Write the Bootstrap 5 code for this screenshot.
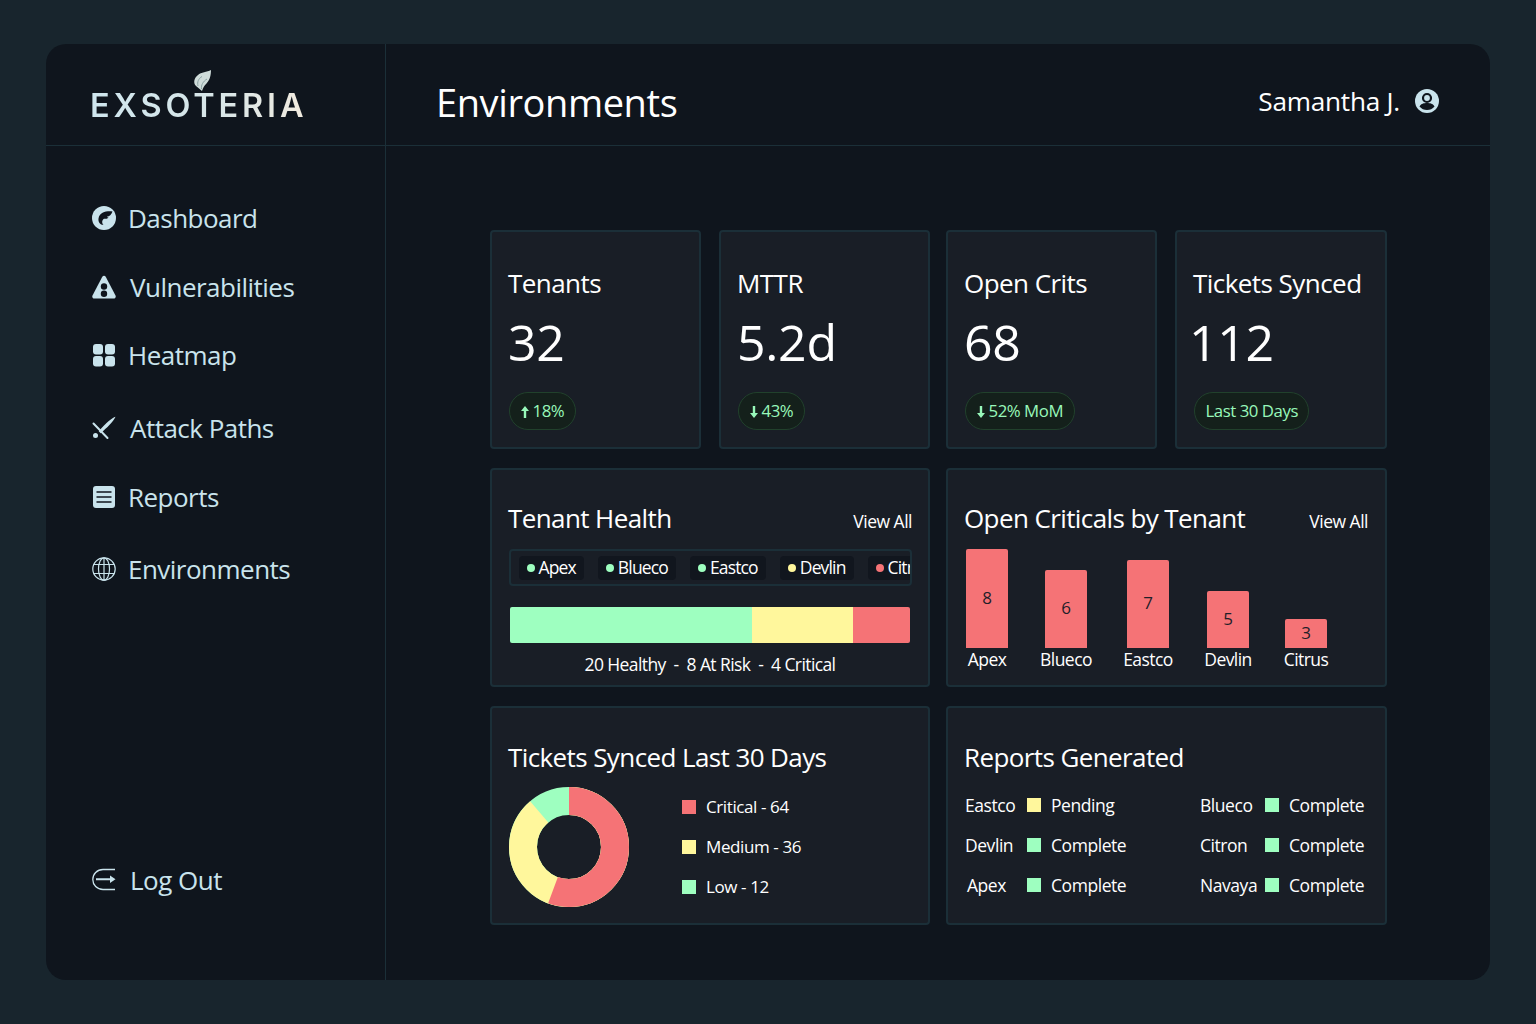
<!doctype html>
<html lang="en">
<head>
<meta charset="utf-8">
<title>Exsoteria - Environments</title>
<link href="https://cdn.jsdelivr.net/npm/bootstrap@5.3.0/dist/css/bootstrap.min.css" rel="stylesheet">
<style>
:root{--ink:#c9e3ec;--tile:#191e26;--line:#1b2f38;--shell:#0f151d;--red:#f57376;--yel:#fff79c;--grn:#9effc0}
html,body{height:100%}
body{background:#18252d;font-family:"Open Sans","Noto Sans",sans-serif;color:#fff;padding:44px 46px;overflow:hidden}
.shell{height:936px;background:var(--shell);border-radius:20px;overflow:hidden}
.rail{width:340px;flex:none;border-right:1px solid var(--line)}
.brand,.topbar{height:102px;border-bottom:1px solid var(--line);flex:none}
.brand{padding:43px 0 0 44px;position:relative}
.wordmark{font-family:Inter,sans-serif;font-weight:600;font-size:32.5px;line-height:38px;letter-spacing:3.85px;background:linear-gradient(90deg,#cfe6ee 0%,#d8e6e8 60%,#f2ebdf 100%);-webkit-background-clip:text;background-clip:text;color:transparent;display:inline-block}
.flame{position:absolute;left:147px;top:25px}
.rail-nav{padding:55px 0 0 46px}
.rail-link{color:var(--ink);font-size:26px;letter-spacing:-.52px;line-height:34px;padding:0;display:flex;align-items:center;gap:12px}
.rail-link:hover,.rail-link:focus{color:var(--ink)}
.rail-link svg{flex:none;width:24px;height:24px}
.rail-item{margin-bottom:35px}
.rail-item:nth-child(2){margin-bottom:34px}
.rail-item:nth-child(3){margin-bottom:39px}
.rail-item:nth-child(4){margin-bottom:35px}
.rail-item:nth-child(5){margin-bottom:38px}
.wide-gap{gap:14px}
.rail-foot{padding:0 0 83px 46px}
.topbar{padding:14px 51px 0 50px}
.page-title{font-size:38px;letter-spacing:-.4px;line-height:48px;font-weight:400;margin:0}
.who{font-size:26.2px;letter-spacing:-.25px;gap:15px}
.stage{padding:84px 103px 0 104px}
.half{width:440px;flex:none}
.half-r{width:441px;flex:none}
.split{gap:16px;margin-bottom:19px}
.split:last-child{margin-bottom:0}
.pair{display:grid;grid-template-columns:211px 211px;gap:18px}
.half-r.pair{grid-template-columns:211px 212px}
.tile{background:var(--tile);border:2px solid var(--line);border-radius:4px;color:#fff;height:219px;padding:0 16px}
.half-r.tile{padding-right:17px}
.tile-name{font-size:26px;letter-spacing:-.55px;line-height:32px;margin-top:35px}
.tile-num{font-size:50px;line-height:60px;margin-top:13px;letter-spacing:-.3px}
.num-pull{margin-left:-4px}
.tile-pill{margin:20px 0 0 1px;height:38px;display:inline-flex;align-items:center;gap:4px;background:#14201b;border:1px solid #21412c;border-radius:19px;color:#98f8ba;font-size:16.8px;font-weight:400;letter-spacing:-.45px;padding:0 10.5px}
.tile-pill svg{width:8px;height:12px;flex:none;margin-top:1px}
.panel-head{margin-top:32px;height:34px}
.panel-title{font-size:26px;letter-spacing:-.6px;line-height:32px;font-weight:400;margin:0}
.view-all{font-size:17.5px;letter-spacing:-.5px;color:#fff;text-decoration:none;margin-top:6px}
.chip-strip{margin-top:13px;height:37px;border:2px solid var(--line);border-radius:4px;overflow:hidden;padding:5px 0 0 8px;width:403px;margin-left:1px;gap:14px}
.chip{flex:none;height:24px;background:#11161e;border-radius:4px;display:flex;align-items:center;gap:3.5px;font-size:17.5px;letter-spacing:-.85px;padding:0 8.5px 1px 8px}
.dot-mark{width:8px;height:8px;border-radius:50%;flex:none;margin-top:1px}
.bg-okay{background:var(--grn)}.bg-warn{background:var(--yel)}.bg-bad{background:var(--red)}
.health-bar{--bs-progress-height:36px;margin:21px 0 0 2px;height:36px;width:400px;border-radius:2px;background:none}
.health-bar .progress{--bs-progress-height:36px;height:36px}
.bar-cap{font-size:17.5px;letter-spacing:-.6px;line-height:22px;text-align:center;margin-top:10px;white-space:pre}
.col-chart{margin:15px 0 0 2px;height:120px;align-items:flex-end}
.bar-col{width:42px;display:flex;flex-direction:column;align-items:center}
.bar-col+.bar-col{margin-left:37px}
.bar-col:nth-child(3){margin-left:40px}
.bar-col:nth-child(4){margin-left:38px}
.bar-col:nth-child(5){margin-left:36px}
.bar-fill{width:42px;background:var(--red);border-radius:2px 2px 0 0;color:#1f2029;font-size:17px;display:flex;align-items:center;justify-content:center;padding-bottom:2px}
.bar-name{font-size:17.5px;letter-spacing:-.55px;line-height:22px;white-space:nowrap;margin-bottom:1px}
.panel-head.lower{margin-top:33px}
.ticket-body{margin-top:12px;gap:53px;padding-left:1px}
.key-list{gap:20px;padding-top:10px}
.key-row{display:flex;align-items:center;gap:10px;font-size:17px;letter-spacing:-.4px;line-height:20px}
.swatch{width:14px;height:14px;flex:none;display:block}
.report-grid{display:grid;grid-template-columns:62px 14px 159px 65px 14px 1fr;column-gap:0;row-gap:20px;margin-top:20px;padding-left:1px;align-items:center;font-size:17.5px;letter-spacing:-.45px;line-height:20px}
.report-grid .stat{padding-left:10px;white-space:nowrap}
.report-grid .nudge{padding-left:2px}
.report-grid .rn{white-space:nowrap}
</style>
</head>
<body>
<div class="shell d-flex">
  <aside class="rail d-flex flex-column">
    <div class="brand">
      <span class="wordmark">EXSOTERIA</span>
      <svg class="flame" width="20" height="24" viewBox="0 0 20 24" aria-hidden="true"><path d="M18 1C14 3 8 3 5 6C1 9 0 14 3 17L9 22C10 19 11 17 13.500 14.500C17 11 18 6 18 1Z" fill="#cfdcda"/><path d="M5 17C4 13 5.500 9.500 9 7.500" stroke="#8aa1a2" stroke-width="1" fill="none"/><path d="M8.500 20C8 16 10 12.500 14 10" stroke="#8aa1a2" stroke-width="1" fill="none"/></svg>
    </div>
    <nav class="rail-nav nav flex-column">
      <div class="rail-item"><a class="nav-link rail-link" href="#">
        <svg viewBox="0 0 24 24" aria-hidden="true"><circle cx="12" cy="12" r="12" fill="#c9e3ec"/><path d="M20.500 5.500C15 4.800 7.500 6 6.500 12.500C6 16 8 19 11.500 19C9.500 17 10 14 12 12.800C14 12.800 15.500 12.800 16.500 11.500C15.500 11.300 15 11 14.800 10.700C17.500 10.500 19.500 8.500 20.500 5.500Z" fill="#0f151d"/></svg>
        Dashboard</a></div>
      <div class="rail-item"><a class="nav-link rail-link wide-gap" href="#">
        <svg viewBox="0 0 24 24" aria-hidden="true"><path d="M10.300 1.800C11.100 .4 12.900 .4 13.700 1.800L23.500 20.500C24.200 22 23.300 23.600 21.700 23.600H2.300C.7 23.600 -.2 22 .5 20.500Z" fill="#c9e3ec"/><circle cx="12" cy="11.500" r="3.200" fill="#0f151d"/><circle cx="12" cy="18.800" r="3.200" fill="#0f151d"/></svg>
        Vulnerabilities</a></div>
      <div class="rail-item"><a class="nav-link rail-link" href="#">
        <svg viewBox="0 0 24 24" aria-hidden="true"><rect x="1" y="1" width="10" height="10.500" rx="3" fill="#c9e3ec"/><rect x="13" y="1" width="10" height="10.500" rx="3" fill="#c9e3ec"/><rect x="1" y="13" width="10" height="10.500" rx="3" fill="#c9e3ec"/><rect x="13" y="13" width="10" height="10.500" rx="3" fill="#c9e3ec"/></svg>
        Heatmap</a></div>
      <div class="rail-item"><a class="nav-link rail-link wide-gap" href="#">
        <svg viewBox="0 0 24 24" aria-hidden="true"><path d="M23.500 .8C20 2 15 6 6 16L8 18C15.500 11 21 6.500 23.500 .8Z" fill="#c9e3ec"/><path d="M1.500 7.500L15.500 22" stroke="#c9e3ec" stroke-width="2" stroke-linecap="round"/><path d="M4 14L9 19" stroke="#0f151d" stroke-width="2"/><circle cx="3.500" cy="19.500" r="2.500" fill="#c9e3ec"/></svg>
        Attack Paths</a></div>
      <div class="rail-item"><a class="nav-link rail-link" href="#">
        <svg viewBox="0 0 24 24" aria-hidden="true"><rect x="1" y="1" width="22" height="22" rx="3" fill="#c9e3ec"/><path d="M4.500 7H19.500M4.500 12H19.500M4.500 17H19.500" stroke="#0f151d" stroke-width="1.500"/></svg>
        Reports</a></div>
      <div class="rail-item"><a class="nav-link rail-link" href="#">
        <svg viewBox="0 0 24 24" fill="none" stroke="#c9e3ec" stroke-width="1.200" aria-hidden="true"><circle cx="12" cy="12" r="11.200"/><ellipse cx="12" cy="12" rx="5.500" ry="11.200"/><path d="M12 .8V23.200M1.800 7.500H22.200M1.800 16.500H22.200"/></svg>
        Environments</a></div>
    </nav>
    <div class="rail-foot mt-auto"><a class="nav-link rail-link wide-gap" href="#">
      <svg viewBox="0 0 24 24" fill="none" stroke="#c9e3ec" stroke-width="1.300" aria-hidden="true"><path d="M23 1.500H11C5 1.500 .8 6 .8 11.500S5 21.500 11 21.500H23"/><path d="M4 11.300H20" stroke-width="2"/><path d="M18 7.500L23.500 11.300L18 15Z" fill="#c9e3ec" stroke="none"/></svg>
      Log Out</a></div>
  </aside>
  <div class="flex-grow-1 d-flex flex-column">
    <header class="topbar d-flex align-items-center justify-content-between">
      <h1 class="page-title">Environments</h1>
      <div class="who d-flex align-items-center">
        <span>Samantha J.</span>
        <svg width="24" height="24" viewBox="0 0 24 24" aria-hidden="true"><circle cx="12" cy="12" r="12" fill="#c9e3ec"/><circle cx="12" cy="9" r="4" fill="none" stroke="#0f151d" stroke-width="2.200"/><path d="M4.500 17.500C6 14.500 9 14 12 14S18 14.500 19.500 17.500C17.500 20 15 21 12 21S6.500 20 4.500 17.500Z" fill="#0f151d"/></svg>
      </div>
    </header>
    <main class="stage flex-grow-1">
      <div class="split d-flex">
        <div class="half pair">
          <div class="card tile"><div class="tile-name">Tenants</div><div class="tile-num">32</div><div><span class="badge tile-pill"><svg viewBox="0 0 8 12" aria-hidden="true"><path d="M4 0L8 5H5.200V12H2.800V5H0Z" fill="#98f8ba"/></svg>18%</span></div></div>
          <div class="card tile"><div class="tile-name">MTTR</div><div class="tile-num">5.2d</div><div><span class="badge tile-pill"><svg viewBox="0 0 8 12" aria-hidden="true"><path d="M4 12L0 7H2.800V0H5.200V7H8Z" fill="#98f8ba"/></svg>43%</span></div></div>
        </div>
        <div class="half-r pair">
          <div class="card tile"><div class="tile-name">Open Crits</div><div class="tile-num">68</div><div><span class="badge tile-pill"><svg viewBox="0 0 8 12" aria-hidden="true"><path d="M4 12L0 7H2.800V0H5.200V7H8Z" fill="#98f8ba"/></svg>52% MoM</span></div></div>
          <div class="card tile"><div class="tile-name">Tickets Synced</div><div class="tile-num num-pull">112</div><div><span class="badge tile-pill">Last 30 Days</span></div></div>
        </div>
      </div>
      <div class="split d-flex">
        <section class="card tile half">
          <div class="panel-head d-flex justify-content-between"><h2 class="panel-title">Tenant Health</h2><a class="view-all" href="#">View All</a></div>
          <div class="chip-strip d-flex">
            <span class="chip"><i class="dot-mark bg-okay"></i>Apex</span>
            <span class="chip"><i class="dot-mark bg-okay"></i>Blueco</span>
            <span class="chip"><i class="dot-mark bg-okay"></i>Eastco</span>
            <span class="chip"><i class="dot-mark bg-warn"></i>Devlin</span>
            <span class="chip"><i class="dot-mark bg-bad"></i>Citrus</span>
          </div>
          <div class="progress-stacked health-bar">
            <div class="progress" role="progressbar" aria-label="Healthy" aria-valuenow="60" aria-valuemin="0" aria-valuemax="100" style="width:60.5%"><div class="progress-bar bg-okay"></div></div>
            <div class="progress" role="progressbar" aria-label="At risk" aria-valuenow="25" aria-valuemin="0" aria-valuemax="100" style="width:25.25%"><div class="progress-bar bg-warn"></div></div>
            <div class="progress" role="progressbar" aria-label="Critical" aria-valuenow="14" aria-valuemin="0" aria-valuemax="100" style="width:14.25%"><div class="progress-bar bg-bad"></div></div>
          </div>
          <div class="bar-cap">20 Healthy  -  8 At Risk  -  4 Critical</div>
        </section>
        <section class="card tile half-r">
          <div class="panel-head d-flex justify-content-between"><h2 class="panel-title">Open Criticals by Tenant</h2><a class="view-all" href="#">View All</a></div>
          <div class="col-chart d-flex">
            <div class="bar-col"><div class="bar-fill" style="height:99px">8</div><div class="bar-name">Apex</div></div>
            <div class="bar-col"><div class="bar-fill" style="height:78px">6</div><div class="bar-name">Blueco</div></div>
            <div class="bar-col"><div class="bar-fill" style="height:88px">7</div><div class="bar-name">Eastco</div></div>
            <div class="bar-col"><div class="bar-fill" style="height:57px">5</div><div class="bar-name">Devlin</div></div>
            <div class="bar-col"><div class="bar-fill" style="height:29px">3</div><div class="bar-name">Citrus</div></div>
          </div>
        </section>
      </div>
      <div class="split d-flex">
        <section class="card tile half">
          <div class="panel-head lower"><h2 class="panel-title">Tickets Synced Last 30 Days</h2></div>
          <div class="ticket-body d-flex">
            <svg width="120" height="120" viewBox="0 0 120 120" fill="none" stroke-width="28" aria-label="Donut chart" role="img"><g transform="rotate(-90 60 60)"><circle cx="60" cy="60" r="46" stroke="#9effc0"/><circle cx="60" cy="60" r="46" stroke="#fff79c" stroke-dasharray="256.2 289.1"/><circle cx="60" cy="60" r="46" stroke="#f57376" stroke-dasharray="160.6 289.1"/></g></svg>
            <div class="key-list d-flex flex-column">
              <div class="key-row"><i class="swatch bg-bad"></i>Critical - 64</div>
              <div class="key-row"><i class="swatch bg-warn"></i>Medium - 36</div>
              <div class="key-row"><i class="swatch bg-okay"></i>Low - 12</div>
            </div>
          </div>
        </section>
        <section class="card tile half-r">
          <div class="panel-head lower"><h2 class="panel-title">Reports Generated</h2></div>
          <div class="report-grid">
            <span class="rn">Eastco</span><i class="swatch bg-warn"></i><span class="stat">Pending</span><span class="rn">Blueco</span><i class="swatch bg-okay"></i><span class="stat">Complete</span>
            <span class="rn">Devlin</span><i class="swatch bg-okay"></i><span class="stat">Complete</span><span class="rn">Citron</span><i class="swatch bg-okay"></i><span class="stat">Complete</span>
            <span class="rn nudge">Apex</span><i class="swatch bg-okay"></i><span class="stat">Complete</span><span class="rn">Navaya</span><i class="swatch bg-okay"></i><span class="stat">Complete</span>
          </div>
        </section>
      </div>
    </main>
  </div>
</div>
<script src="https://cdn.jsdelivr.net/npm/bootstrap@5.3.0/dist/js/bootstrap.bundle.min.js"></script>
</body>
</html>
